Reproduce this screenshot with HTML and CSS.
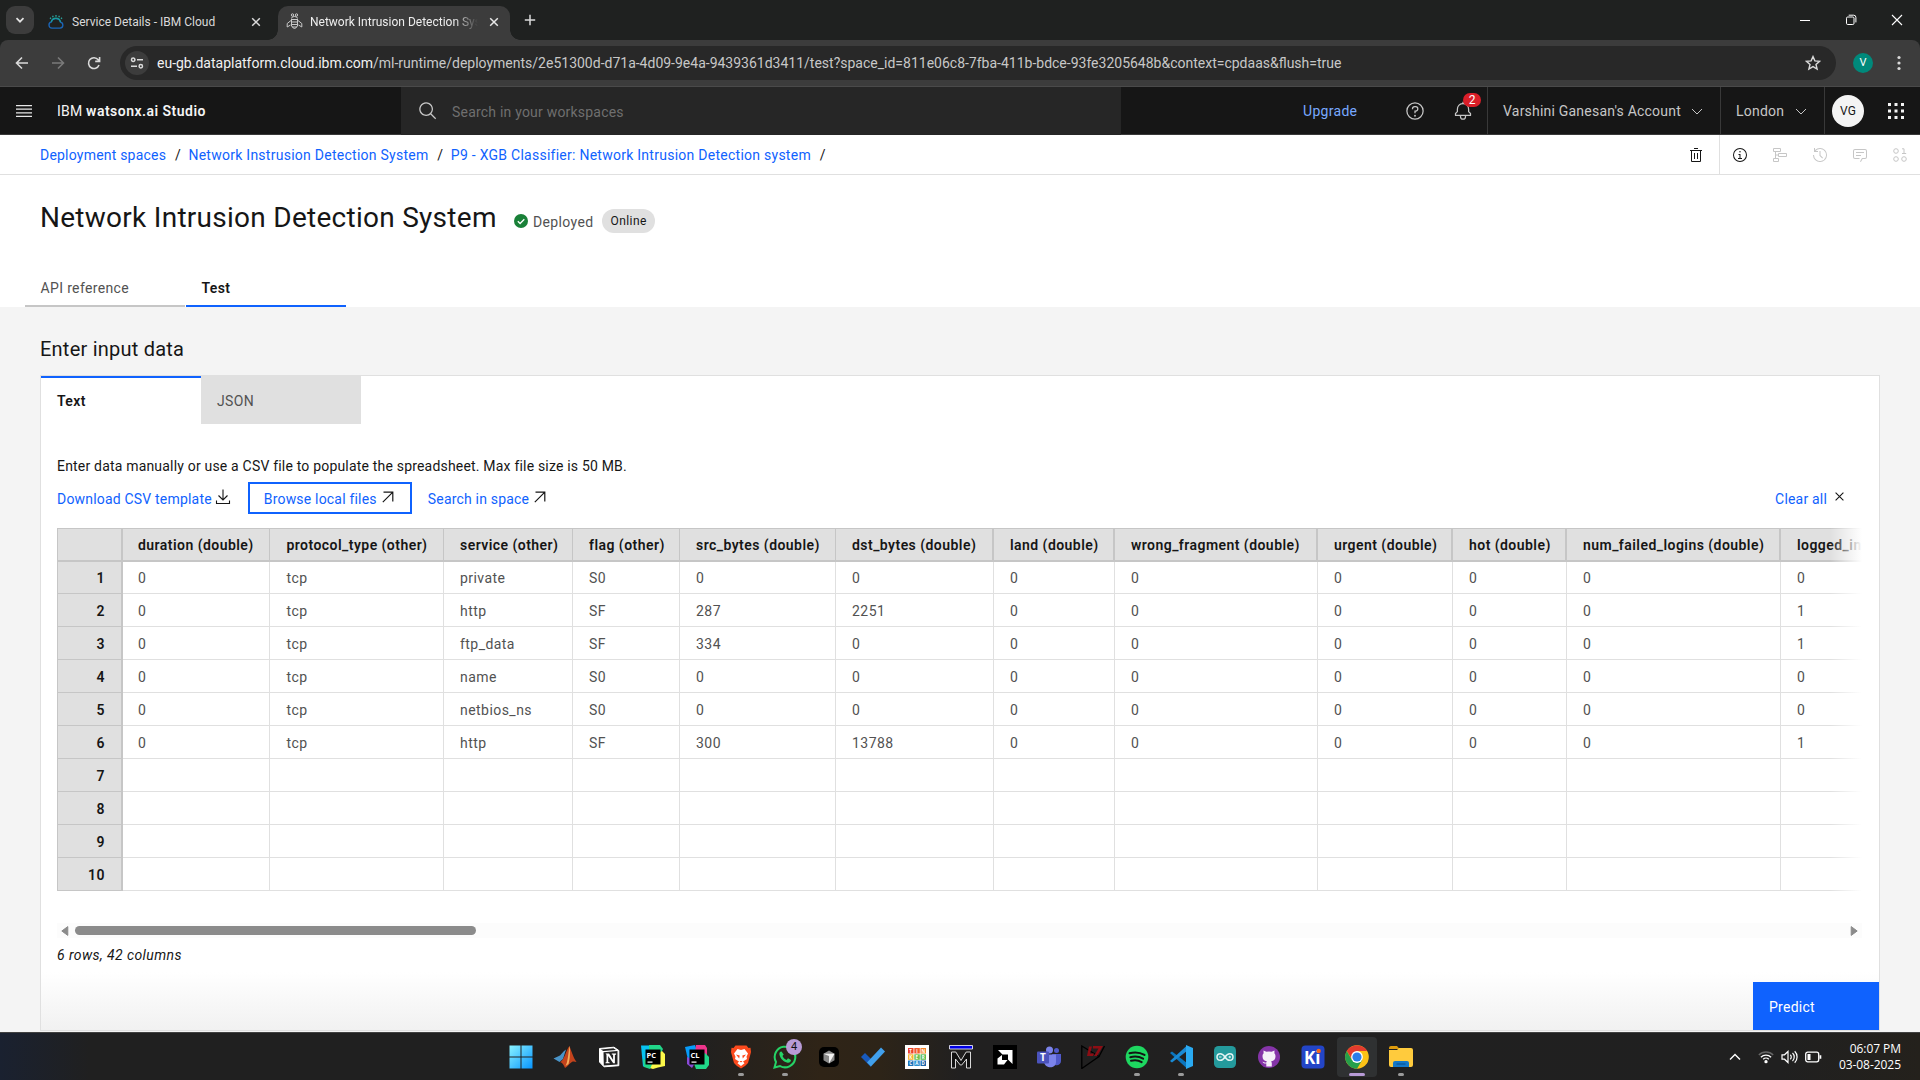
FILE: index.html
```
<!DOCTYPE html>
<html lang="en">
<head>
<meta charset="utf-8">
<title>Network Intrusion Detection System</title>
<link rel="stylesheet" href="styles.css">
</head>
<body>
<div class="tabstrip">
  <div class="tab-search"><svg width="10" height="10" viewBox="0 0 10 10"><path d="M1.5 3.2 5 6.7l3.5-3.5" fill="none" stroke="#e3e3e3" stroke-width="1.7"/></svg></div>
  <div class="btab">
    <svg class="fav" width="16" height="16" viewBox="0 0 16 16" fill="none" stroke-width="1.3"><path d="M4 14.2a3.2 3.2 0 0 1-.6-6.3A4.6 4.6 0 0 1 8 4.6c2.200 0 4 1.500 4.500 3.500a3.100 3.100 0 0 1-.5 6.100z" stroke="#1b66b8"/><path d="M3.300 8A4.700 4.700 0 0 1 12.500 8" stroke="#189c9c"/><path d="M3 4.800 2 3.800M5.200 3.300l-.6-1.500M8 2.800V1M10.800 3.300l.6-1.500M13 4.800l1-1" stroke="#2ba7a0"/></svg>
    <span class="btab-title">Service Details - IBM Cloud</span>
    <svg class="x" width="10" height="10" viewBox="0 0 10 10"><path d="m1.200 1.200 7.600 7.600m0-7.600L1.200 8.800" stroke="#dadada" stroke-width="1.500"/></svg>
  </div>
  <div class="btab active">
    <svg class="fav" width="17" height="17" viewBox="0 0 17 17" fill="none" stroke="#c9c9c9"><circle cx="6.500" cy="2" r="1.200"/><circle cx="10.500" cy="2" r="1.200"/><path d="M5.500 5.500a3 2 0 0 1 6 0M5 6.500h7M5 9h7M5.300 11.500h6.400M6 14h5M8.500 16l-3-3V6.500h6V13zM5 7.500l-3.800 3v3.500L4.500 12M12 7.500l3.800 3v3.500L12.500 12"/></svg>
    <span class="btab-title fade">Network Intrusion Detection System</span>
    <svg class="x" width="10" height="10" viewBox="0 0 10 10"><path d="m1.200 1.200 7.600 7.600m0-7.600L1.200 8.800" stroke="#e8e8e8" stroke-width="1.500"/></svg>
  </div>
  <svg class="newtab" width="12" height="12" viewBox="0 0 12 12"><path d="M6 .8v10.400M.8 6h10.400" stroke="#dadada" stroke-width="1.500"/></svg>
  <div class="winctl">
    <svg width="12" height="12" viewBox="0 0 12 12"><path d="M1 6.500h10" stroke="#fff"/></svg>
    <svg width="12" height="12" viewBox="0 0 12 12" fill="none" stroke="#fff"><rect x="1.500" y="3" width="7.500" height="7.500" rx="1.200"/><path d="M3.700 1.200h5a2.200 2.200 0 0 1 2.200 2.200v5"/></svg>
    <svg width="12" height="12" viewBox="0 0 12 12"><path d="m1 1 10 10M11 1 1 11" stroke="#fff" stroke-width="1.100"/></svg>
  </div>
</div>
<div class="toolbar">
  <svg class="nav back" width="14" height="14" viewBox="0 0 14 14" fill="none" stroke="#dadada" stroke-width="1.600"><path d="M13 7H1.800M7 1.500 1.500 7 7 12.500"/></svg>
  <svg class="nav fwd" width="14" height="14" viewBox="0 0 14 14" fill="none" stroke="#7a7a7a" stroke-width="1.600"><path d="M1 7h11.200M7 1.500 12.500 7 7 12.500"/></svg>
  <svg class="nav reload" width="14" height="14" viewBox="0 0 14 14" fill="none" stroke="#dadada" stroke-width="1.600"><path d="M12 9a5.400 5.400 0 1 1-.8-5.200L12.400 5M12.600 1v4.400H8.200"/></svg>
  <div class="omnibox">
    <div class="siteinfo"><svg width="14" height="14" viewBox="0 0 14 14" fill="none" stroke="#dadada" stroke-width="1.500"><circle cx="3.200" cy="3.700" r="1.700"/><path d="M7 3.700h6M1 10.300h6"/><circle cx="10.800" cy="10.300" r="1.700"/></svg></div>
    <span class="url"><b>eu-gb.dataplatform.cloud.ibm.com</b>/ml-runtime/deployments/2e51300d-d71a-4d09-9e4a-9439361d3411/test?space_id=811e06c8-7fba-411b-bdce-93fe3205648b&amp;context=cpdaas&amp;flush=true</span>
    <svg class="star" width="16" height="16" viewBox="0 0 16 16"><path d="m8 1.600 1.900 4.300 4.700.4-3.600 3.100 1.100 4.600L8 11.600 3.900 14 5 9.400 1.400 6.300l4.700-.4z" fill="none" stroke="#dadada" stroke-width="1.400"/></svg>
  </div>
  <span class="profile">V</span>
  <svg class="kebab" width="4" height="16" viewBox="0 0 4 16" fill="#dadada"><circle cx="2" cy="2.500" r="1.600"/><circle cx="2" cy="8" r="1.600"/><circle cx="2" cy="13.500" r="1.600"/></svg>
</div>

<header class="header">
  <div class="brand">
    <svg width="16" height="14" viewBox="0 0 16 14" fill="#e8e8e8"><path d="M0 1h16v1.200H0zM0 4.600h16v1.200H0zM0 8.200h16v1.200H0zM0 11.800h16V13H0z"/></svg>
    <span>IBM <b>watsonx.ai Studio</b></span>
  </div>
  <div class="search">
    <svg width="20" height="20" viewBox="0 0 32 32" fill="#c6c6c6"><path d="m29 27.600-7.600-7.600a11 11 0 1 0-1.400 1.400l7.600 7.600zM4 13a9 9 0 1 1 9 9 9 9 0 0 1-9-9z"/></svg>
    <span>Search in your workspaces</span>
  </div>
  <a class="upgrade">Upgrade</a>
  <svg class="help" width="20" height="20" viewBox="0 0 32 32" fill="#c6c6c6"><path d="M16 2a14 14 0 1 0 14 14A14 14 0 0 0 16 2zm0 26a12 12 0 1 1 12-12 12 12 0 0 1-12 12z"/><circle cx="16" cy="23.500" r="1.500"/><path d="M17 8h-1.500a4.500 4.500 0 0 0-4.500 4.500v.5h2v-.5a2.500 2.500 0 0 1 2.500-2.500H17a2.500 2.500 0 0 1 0 5h-2v4.500h2V17a4.500 4.500 0 0 0 0-9z"/></svg>
  <div class="bell">
    <svg width="20" height="20" viewBox="0 0 32 32" fill="#c6c6c6"><path d="m28.700 19.300-2.700-2.700V13a10 10 0 0 0-9-9.900V1h-2v2.100A10 10 0 0 0 6 13v3.600l-2.700 2.700a1 1 0 0 0-.3.700v3a1 1 0 0 0 1 1h7v1a5 5 0 0 0 10 0v-1h7a1 1 0 0 0 1-1v-3a1 1 0 0 0-.3-.7zM19 25a3 3 0 0 1-6 0v-1h6zm8-3H5v-1.600l2.700-2.700A1 1 0 0 0 8 17v-4a8 8 0 0 1 16 0v4a1 1 0 0 0 .3.700l2.700 2.700z"/></svg>
    <span class="badge">2</span>
  </div>
  <div class="hcell account"><span>Varshini Ganesan's Account</span><svg width="16" height="16" viewBox="0 0 16 16"><path d="m3 6 5 5 5-5" fill="none" stroke="#c6c6c6"/></svg></div>
  <div class="hcell city"><span>London</span><svg width="16" height="16" viewBox="0 0 16 16"><path d="m3 6 5 5 5-5" fill="none" stroke="#c6c6c6"/></svg></div>
  <div class="hcell last"><span class="avatar">VG</span>
    <svg width="16" height="16" viewBox="0 0 16 16" fill="#f4f4f4"><path d="M0 0h3v3H0zM6.500 0h3v3h-3zM13 0h3v3h-3zM0 6.500h3v3H0zM6.500 6.500h3v3h-3zM13 6.500h3v3h-3zM0 13h3v3H0zM6.500 13h3v3h-3zM13 13h3v3h-3z"/></svg>
  </div>
</header>

<nav class="crumbs">
  <a>Deployment spaces</a><i>/</i><a class="c2">Network Instrusion Detection System</a><i>/</i><a class="c3">P9 - XGB Classifier: Network Intrusion Detection system</a><i>/</i>
  <svg class="trash" width="16" height="16" viewBox="0 0 32 32" fill="#161616"><path d="M12 12h2v12h-2zm6 0h2v12h-2z"/><path d="M4 6v2h2v20a2 2 0 0 0 2 2h16a2 2 0 0 0 2-2V8h2V6zm4 22V8h16v20zm4-26h8v2h-8z"/></svg>
  <div class="tools">
    <svg width="16" height="16" viewBox="0 0 32 32" fill="#161616"><path d="M17 22v-8h-4v2h2v6h-3v2h8v-2zM16 8a1.500 1.500 0 1 0 1.500 1.500A1.500 1.500 0 0 0 16 8z"/><path d="M16 30a14 14 0 1 1 14-14 14 14 0 0 1-14 14zm0-26a12 12 0 1 0 12 12A12 12 0 0 0 16 4z"/></svg>
    <svg width="16" height="16" viewBox="0 0 16 16" fill="none" stroke="#c6c6c6"><path d="M1.500 1.500h7v3h-7zM6.500 6.500h8v3h-8zM1.500 11.500h5v3h-5zM3.500 4.500V8h3M3.500 8v3.500"/></svg>
    <svg width="16" height="16" viewBox="0 0 32 32" fill="#c6c6c6"><path d="M20.600 23 15 17.400V8h2v8.600l5 5z"/><path d="M16 2A14 14 0 0 0 6 6.200V2H4v8h8V8H7.100A12 12 0 1 1 4 16H2A14 14 0 1 0 16 2z"/></svg>
    <svg width="16" height="16" viewBox="0 0 32 32" fill="#c6c6c6"><path d="M17.700 30 16 29l4-7h6a2 2 0 0 0 2-2V8a2 2 0 0 0-2-2H6a2 2 0 0 0-2 2v12a2 2 0 0 0 2 2h9v2H6a4 4 0 0 1-4-4V8a4 4 0 0 1 4-4h20a4 4 0 0 1 4 4v12a4 4 0 0 1-4 4h-4.800z"/><path d="M8 10h16v2H8zm0 6h10v2H8z"/></svg>
    <svg width="16" height="16" viewBox="0 0 16 16" fill="none" stroke="#c6c6c6"><circle cx="4" cy="4" r="2.300"/><circle cx="4" cy="12" r="2.300"/><circle cx="12" cy="12" r="2.300"/><path d="M10 1.800h2v4.700M10 6.500h4.200"/></svg>
  </div>
</nav>

<section class="pagehead">
  <div class="titlerow">
    <h1>Network Intrusion Detection System</h1>
    <svg width="14" height="14" viewBox="0 0 14 14"><circle cx="7" cy="7" r="7" fill="#198038"/><path d="m3.800 7.200 2.300 2.300 4.200-4.300" fill="none" stroke="#fff" stroke-width="1.300"/></svg>
    <span class="deployed">Deployed</span><span class="tag">Online</span>
  </div>
  <div class="tabs"><div class="tab">API reference</div><div class="tab on">Test</div></div>
</section>

<main class="main">
  <h2>Enter input data</h2>
  <div class="panel">
    <div class="ptabs"><div class="ptab on">Text</div><div class="ptab">JSON</div></div>
    <p class="desc">Enter data manually or use a CSV file to populate the spreadsheet. Max file size is 50 MB.</p>
    <div class="actions">
      <a class="act dl">Download CSV template<svg width="16" height="16" viewBox="0 0 16 16" fill="none" stroke="#161616" stroke-width="1.100"><path d="M8 .5v10.300M3.500 6.500 8 11l4.500-4.500M1.500 11.500v3h13v-3"/></svg></a>
      <a class="act browse">Browse local files<svg width="12" height="12" viewBox="0 0 12 12" fill="none" stroke="#161616" stroke-width="1.200"><path d="M1.500 1.200h9.300v9.300M10.800 1.200.8 11.200"/></svg></a>
      <a class="act">Search in space<svg width="12" height="12" viewBox="0 0 12 12" fill="none" stroke="#161616" stroke-width="1.200"><path d="M1.500 1.200h9.300v9.300M10.800 1.200.8 11.200"/></svg></a>
      <a class="act clear">Clear all<svg width="9" height="9" viewBox="0 0 9 9"><path d="m.6.6 7.800 7.800m0-7.800L.6 8.400" stroke="#161616" stroke-width="1.100"/></svg></a>
    </div>
    <div class="sheet">
      <table>
        <colgroup><col class="w0"><col class="w1"><col class="w2"><col class="w3"><col class="w4"><col class="w5"><col class="w6"><col class="w7"><col class="w8"><col class="w9"><col class="w10"><col class="w11"><col class="w12"></colgroup>
        <thead><tr><th></th><th>duration (double)</th><th>protocol_type (other)</th><th>service (other)</th><th>flag (other)</th><th>src_bytes (double)</th><th>dst_bytes (double)</th><th>land (double)</th><th>wrong_fragment (double)</th><th>urgent (double)</th><th>hot (double)</th><th>num_failed_logins (double)</th><th>logged_in (double)</th></tr></thead>
        <tbody>
        <tr><th>1</th><td>0</td><td>tcp</td><td>private</td><td>S0</td><td>0</td><td>0</td><td>0</td><td>0</td><td>0</td><td>0</td><td>0</td><td>0</td></tr>
        <tr><th>2</th><td>0</td><td>tcp</td><td>http</td><td>SF</td><td>287</td><td>2251</td><td>0</td><td>0</td><td>0</td><td>0</td><td>0</td><td>1</td></tr>
        <tr><th>3</th><td>0</td><td>tcp</td><td>ftp_data</td><td>SF</td><td>334</td><td>0</td><td>0</td><td>0</td><td>0</td><td>0</td><td>0</td><td>1</td></tr>
        <tr><th>4</th><td>0</td><td>tcp</td><td>name</td><td>S0</td><td>0</td><td>0</td><td>0</td><td>0</td><td>0</td><td>0</td><td>0</td><td>0</td></tr>
        <tr><th>5</th><td>0</td><td>tcp</td><td>netbios_ns</td><td>S0</td><td>0</td><td>0</td><td>0</td><td>0</td><td>0</td><td>0</td><td>0</td><td>0</td></tr>
        <tr><th>6</th><td>0</td><td>tcp</td><td>http</td><td>SF</td><td>300</td><td>13788</td><td>0</td><td>0</td><td>0</td><td>0</td><td>0</td><td>1</td></tr>
        <tr><th>7</th><td></td><td></td><td></td><td></td><td></td><td></td><td></td><td></td><td></td><td></td><td></td><td></td></tr>
        <tr><th>8</th><td></td><td></td><td></td><td></td><td></td><td></td><td></td><td></td><td></td><td></td><td></td><td></td></tr>
        <tr><th>9</th><td></td><td></td><td></td><td></td><td></td><td></td><td></td><td></td><td></td><td></td><td></td><td></td></tr>
        <tr><th>10</th><td></td><td></td><td></td><td></td><td></td><td></td><td></td><td></td><td></td><td></td><td></td><td></td></tr>
        </tbody>
      </table>
    </div>
    <div class="scroll">
      <svg width="8" height="10" viewBox="0 0 8 10"><path d="M6.800.6v8.800L.8 5z" fill="#8b8b8b" stroke="#8b8b8b" stroke-linejoin="round"/></svg>
      <span class="thumb"></span>
      <svg class="right" width="8" height="10" viewBox="0 0 8 10"><path d="M1.200.6v8.800l6-4.400z" fill="#8b8b8b" stroke="#8b8b8b" stroke-linejoin="round"/></svg>
    </div>
    <p class="count">6 rows, 42 columns</p>
    <div class="foot"><button class="predict">Predict</button></div>
  </div>
</main>

<footer class="taskbar">
  <div class="apps">
    <div class="app"><svg viewBox="0 0 24 24"><defs><linearGradient id="win" x2="1" y2="1"><stop stop-color="#8af3ff"/><stop offset="1" stop-color="#0795ff"/></linearGradient></defs><path d="M.5.500h11v11H.5zM12.500.500h11v11h-11zM.5 12.500h11v11H.5zM12.500 12.500h11v11h-11z" fill="url(#win)"/></svg></div>
    <div class="app"><svg viewBox="0 0 24 24"><path d="m.5 13.500 6.500-3 4-4.500 2-1.500-3 9.500-3.500 3z" fill="#4a94c8"/><path d="M7 17c4-1 6-12 9.500-16 1.500 4 4 12 7 16-2.500-1-4.500-1-6.500 1.500-2 2-3.500 3.500-5 4.500-1.500-3.500-2.500-5.500-5-6z" fill="#c3431c"/><path d="M12.500 21C15 17 15.500 6 16.500 1c1 5 .5 13-1 18z" fill="#f6b15d"/></svg></div>
    <div class="app"><svg viewBox="0 0 24 24"><path d="M2.500 3.500 17 2.200l4.800 3.300v15.200L7 21.800 2.500 17z" fill="#fff" stroke="#fff"/><path d="M6.500 7.200 20.500 6v13.500L6.800 20.400zM3.800 4.400 16.500 3.300 19 5 6.300 6z" fill="#222"/><path d="M8.500 8.500h3.600l4 6.500V9.800l-1.300-.4v-1h4.300v1l-1.200.5v8.300h-1.700L11.200 11v6l1.500.5v.8H8.500v-.8l1-.5V9.800z" fill="#fff"/></svg></div>
    <div class="app"><svg viewBox="0 0 24 24"><path d="M0 .5h11l-3 21H2z" fill="#07c3f2"/><path d="M8 0h11l3 4-2 4H8z" fill="#21d789"/><path d="M5 22 12 12l9-6 3 3v12l-7 1.500-5 1.500z" fill="#fcf84a"/><path d="m2 14 10 3-3 7-6-2z" fill="#21d789"/><path d="M4.500 4.500h15v15h-15z"/><text x="5.500" y="12.500" class="jb">PC</text><path d="M6.500 16.500h5v1.200h-5z" fill="#fff"/></svg></div>
    <div class="app"><svg viewBox="0 0 24 24"><path d="M0 2 10 0l3 9-9 10z" fill="#079cfa"/><path d="M11 0h9l2 3v8l-12-3z" fill="#ed358c"/><path d="m2 12 9 4-4 7-5-4z" fill="#8a4bd8"/><path d="m8 16 12-8 4 4v8l-3 4H11z" fill="#21d789"/><path d="M4.500 4.500h15v15h-15z"/><text x="5.500" y="12.500" class="jb">CL</text><path d="M6.500 16.500h5v1.200h-5z" fill="#fff"/></svg></div>
    <div class="app run"><svg viewBox="0 0 24 24"><path d="M6.500.5h11L19.500 3l2-.3L22 7l-.5 2-2.500 9-3 3-4 2.500L8 21l-3-3L2.500 9 2 7l.5-4.300 2 .3z" fill="#fb4a1d"/><path d="m12 5 3.500-1L19 8.500l-1.500 3.200.5 2.300-4 2.500 1.500 1.700L12 21l-3.500-2.800L10 16.500 6 14l.5-2.300L5 8.500 8.500 4z" fill="#fff"/><path d="m7 9.500 3.700 1-.5 3zM17 9.500l-3.700 1 .5 3zM10.500 16h3L12 17.500z" fill="#fb4a1d"/></svg></div>
    <div class="app run"><svg viewBox="0 0 24 24"><path d="M1.500 22.500 3 17A10.300 10.300 0 1 1 7 21z" fill="none" stroke="#25d366" stroke-width="2"/><path d="M8.500 6.500c-1.700 0-2.500 1.700-2 3.500 1 3.700 4.300 7 8 7.700 2 .3 3.500-.9 3.500-2.700l-3-1.700-1.500 1.600c-1.600-.6-3.300-2.200-4-4l1.200-1.500z" fill="#25d366"/></svg><span class="count4">4</span></div>
    <div class="app"><svg viewBox="0 0 24 24"><rect x="2" y="2" width="20" height="20" rx="5" fill="#000"/><path d="m12 5.500 5.500 3.200v6.600L12 18.500l-5.500-3.200V8.700z" fill="#8a8a8a"/><path d="m6.500 8.700 11 0L12 18.500V11z" fill="#f1f1f1"/></svg></div>
    <div class="app"><svg viewBox="0 0 24 24"><path d="m0 12 4-4 6 6v8z" fill="#185abd"/><path d="M6 17.500 20 2.500l4 4L10 21.500z" fill="#41a0ec"/></svg></div>
    <div class="app"><svg viewBox="0 0 24 24"><path d="M0 0h24v24H0z" fill="#fff"/><path d="M3 3h5.500v5.500H3z" fill="#ed3f2b"/><path d="M9.300 3h5.500v5.500H9.300z" fill="#f15b2b"/><path d="M15.500 3H21v5.500h-5.500z" fill="#f5842b"/><path d="M3 9.300h5.500v5.500H3z" fill="#f6b32b"/><path d="M9.300 9.300h5.500v5.500H9.300z" fill="#6cc04a"/><path d="M15.500 9.300H21v5.500h-5.500z" fill="#5bbd53"/><path d="M3 15.500h5.500V21H3z" fill="#1c75bc"/><path d="M9.300 15.500h5.500V21H9.300z" fill="#2b8fd1"/><path d="M15.500 15.500H21V21h-5.500z" fill="#1c63a8"/><g class="tk"><text x="4.200" y="7.500">T</text><text x="11.200" y="7.500">I</text><text x="16.500" y="7.500">N</text><text x="4.200" y="13.800">K</text><text x="10.500" y="13.800">E</text><text x="16.700" y="13.800">R</text><text x="4.200" y="20">C</text><text x="10.300" y="20">A</text><text x="16.500" y="20">D</text></g></svg></div>
    <div class="app"><svg viewBox="0 0 24 24"><path d="M.5.500h23v3.500H.5z" fill="#0000e6" stroke="#fff" stroke-width=".8"/><path d="M2.500 23V7h4.300L12 15.500 17.200 7h4.300v16h-4v-9L12.700 20h-1.400L6.500 14v9z" fill="#111" stroke="#eee" stroke-width=".9"/></svg></div>
    <div class="app"><svg viewBox="0 0 24 24"><path d="M0 0h24v24H0z"/><path d="M5 5h14.500v14L15 14.500V9.500h-5.500z" fill="#fff"/><path d="M4.500 13.500 9 10v5h5.500L11 19.500H4.500z" fill="#fff"/></svg></div>
    <div class="app"><svg viewBox="0 0 24 24"><circle cx="19.500" cy="5.500" r="2.500" fill="#5059c9"/><path d="M15 9h9v7c0 3-3 5-6 4z" fill="#5059c9"/><circle cx="12.500" cy="5" r="3.500" fill="#7b83eb"/><path d="M7 9.500h12V17c0 7-11 7-12 0z" fill="#7b83eb"/><rect y="6.500" width="12" height="12" rx="1" fill="#4b53bc"/><text x="3" y="16" class="teams">T</text></svg></div>
    <div class="app"><svg viewBox="0 0 24 24"><path d="M.8 1 18 11.500.8 23.500zM18 11.500 23.500 1" fill="none" stroke="#000" stroke-width="1.300"/><path d="M8 1.500h3L9 8.500h4l-1 2.500H6zM12 1h10l-6 10h-3l4.500-7.500H12z" fill="#8d0d14"/></svg></div>
    <div class="app run"><svg viewBox="0 0 24 24"><circle cx="12" cy="12" r="11.300" fill="#1ed760"/><path d="M4.500 8.300c5-1.400 10.500-.9 15 1.600M5.300 12.200c4.300-1.200 9-.7 12.800 1.500M6 15.800c3.700-1 7.500-.6 10.700 1.300" fill="none" stroke="#131313" stroke-width="2" stroke-linecap="round"/></svg></div>
    <div class="app run"><svg viewBox="0 0 24 24"><path d="m1 8 2-1.500L18 18v5.500z" fill="#0b75bd"/><path d="m1 16 2 1.500L18 6V.5z" fill="#1a8ad4"/><path d="M17 0 24 3v18l-7 3z" fill="#2aaaf2"/></svg></div>
    <div class="app"><svg viewBox="0 0 24 24"><rect x="1" y="1" width="22" height="22" rx="4.500" fill="#249a9c"/><path d="M12 12c-2-3-3.500-3.300-4.700-3.300a3.300 3.300 0 0 0 0 6.600C8.500 15.300 10 15 12 12s3.500-3.300 4.700-3.300a3.300 3.300 0 0 1 0 6.600C15.500 15.300 14 15 12 12z" fill="none" stroke="#e3f4f3" stroke-width="1.500"/><path d="M6 12h2.500M15.500 12H18M16.800 10.800v2.400" stroke="#e3f4f3"/></svg></div>
    <div class="app"><svg viewBox="0 0 24 24"><circle cx="12" cy="12" r="11" fill="#8534a8"/><path d="M9.300 21.500v-3c-2.300.5-3-.7-3.800-1.700 1.500-.3 2 1.300 3.800.8l.5-1.300C7 15.800 5.500 14.200 5.500 11.300c0-1.400.4-2.300 1.100-3.100l-.1-2.700 2.900 1.200a11 11 0 0 1 5.200 0l2.900-1.200-.1 2.700c.7.800 1.100 1.700 1.100 3.100 0 2.900-1.500 4.500-4.300 5l.6 1.800v3.400z" fill="#f5f0f8"/></svg></div>
    <div class="app"><svg viewBox="0 0 24 24"><rect x=".5" y=".5" width="23" height="23" rx="4" fill="#2345c7"/><text x="3" y="19" class="ki">Ki</text><circle cx="17.700" cy="6" r="2.200" fill="#f4661b"/></svg></div>
    <div class="app run focus"><svg viewBox="0 0 24 24"><circle cx="12" cy="12" r="11.800" fill="#fbc116"/><path d="M1.800 6A11.800 11.800 0 0 1 22.200 6H12L8 16z" fill="#e33b2e"/><path d="M1.800 6A11.800 11.800 0 0 0 12 23.800L17.200 15 6.900 15z" fill="#269f4b"/><circle cx="12" cy="12" r="5.900" fill="#fff"/><circle cx="12" cy="12" r="4.600" fill="#2b7de9"/></svg></div>
    <div class="app run"><svg viewBox="0 0 24 24"><path d="M0 3a2 2 0 0 1 2-2h6l2.500 3H0z" fill="#e09c0c"/><path d="M0 5h8l2-2h12a2 2 0 0 1 2 2v15a2 2 0 0 1-2 2H2a2 2 0 0 1-2-2z" fill="#ffcb3d"/><path d="M4 22v-4a2 2 0 0 1 2-2h12a2 2 0 0 1 2 2v4z" fill="#1478c8"/><path d="M7.500 19h9" stroke="#0c5ba1" stroke-width="1.500"/></svg></div>
  </div>
  <div class="tray">
    <svg class="up" width="12" height="8" viewBox="0 0 12 8"><path d="m1 6.500 5-5 5 5" fill="none" stroke="#fff" stroke-width="1.400"/></svg>
    <svg class="wifi" width="16" height="14" viewBox="0 0 16 14" fill="none" stroke="#fff" stroke-width="1.300"><path d="M.8 5a10.200 10.200 0 0 1 14.400 0" stroke="#666"/><path d="M2.900 7.200a7.200 7.200 0 0 1 10.200 0M5.200 9.300a4 4 0 0 1 5.600 0"/><circle cx="8" cy="11.700" r="1" fill="#fff"/></svg>
    <svg class="vol" width="17" height="14" viewBox="0 0 17 14" fill="none" stroke="#fff" stroke-width="1.200"><path d="M1 4.800h2.500L7 1.500v11L3.500 9.200H1zM9.300 4.800a3 3 0 0 1 0 4.400M11.500 3a5.500 5.500 0 0 1 0 8M13.700 1.300a8 8 0 0 1 0 11.400"/></svg>
    <svg class="bat" width="17" height="12" viewBox="0 0 17 12"><rect x=".7" y="1.200" width="13" height="9.600" rx="2" fill="none" stroke="#fff" stroke-width="1.300"/><path d="M2.500 3h3v6h-3zM14.500 4.200h1.800v3.600h-1.800z" fill="#fff"/></svg>
    <div class="clock"><span>06:07 PM</span><span>03-08-2025</span></div>
  </div>
</footer>
</body>
</html>
```
FILE: styles.css
```
* { box-sizing: border-box; }
body {
  margin: 0;
  width: 1920px;
  height: 1080px;
  overflow: hidden;
  display: flex;
  flex-direction: column;
  background: #1f2120;
  color: #161616;
  font: 14px/18px Roboto, "Liberation Sans", sans-serif;
  letter-spacing: .21px;
}
svg { display: block; flex: none; }
h1, h2, p { margin: 0; font-weight: 400; }

/* browser chrome */
.tabstrip {
  height: 40px;
  flex: none;
  display: flex;
  align-items: flex-end;
  color: #dadada;
  font-size: 12px;
  letter-spacing: 0;
}
.tab-search {
  width: 28px; height: 28px;
  margin: 0 0 6px 6px;
  border-radius: 9px;
  background: #3c3c3c;
  display: grid;
  place-items: center;
}
.btab {
  height: 34px;
  width: 232px;
  margin-left: 6px;
  padding: 0 0 3px 8px;
  display: flex;
  align-items: center;
}
.btab.active {
  background: #3c3c3c;
  border-radius: 10px 10px 0 0;
  color: #eee;
  position: relative;
}
.btab.active::before, .btab.active::after {
  content: "";
  position: absolute;
  bottom: 0;
  width: 10px; height: 10px;
}
.btab.active::before { left: -10px; background: radial-gradient(circle at 0 0, transparent 9.500px, #3c3c3c 10px); }
.btab.active::after { right: -10px; background: radial-gradient(circle at 100% 0, transparent 9.500px, #3c3c3c 10px); }
.btab-title { margin-left: 8px; width: 169px; white-space: nowrap; overflow: hidden; }
.btab.active .btab-title { margin-left: 7px; }
.btab-title.fade { -webkit-mask-image: linear-gradient(90deg, #000 144px, transparent 168px); mask-image: linear-gradient(90deg, #000 144px, transparent 168px); }
.btab .x { margin-left: 10px; }
.newtab { margin: 0 0 14px 14px; }
.winctl { margin-left: auto; display: flex; gap: 34px; padding: 0 17px 14px 0; }
.toolbar {
  height: 47px;
  flex: none;
  display: flex;
  align-items: center;
  padding: 0 19px 1px 15px;
  background: #3c3c3c;
  border-bottom: 1px solid #4a4a4a;
  border-radius: 8px 8px 0 0;
}
.nav.fwd, .nav.reload { margin-left: 22px; }
.omnibox {
  width: 1716px; height: 34px;
  margin-left: 19px;
  border-radius: 17px;
  background: #282828;
  display: flex;
  align-items: center;
  padding: 0 15px 0 5px;
  color: #c7c7c7;
  letter-spacing: 0;
}
.omnibox b { font-weight: 400; color: #f2f2f2; }
.siteinfo { width: 24px; height: 24px; border-radius: 12px; background: #3c3c3c; display: grid; place-items: center; }
.url { margin-left: 8px; }
.star { margin-left: auto; }
.profile { width: 20px; height: 20px; margin-left: 17px; border-radius: 50%; background: #00897b; color: #fff; font-size: 11px; line-height: 20px; text-align: center; }
.kebab { margin-left: auto; }

/* application header */
.header { height: 48px; flex: none; display: flex; align-items: center; background: #161616; color: #c6c6c6; border-bottom: 1px solid #393939; }
.header span:not(.badge):not(.avatar), .upgrade { padding-top: 1px; }
.brand { width: 401px; display: flex; align-items: center; padding-left: 16px; gap: 25px; color: #f4f4f4; }
.brand b { font-weight: 600; letter-spacing: .48px; }
.search { width: 720px; height: 48px; background: #262626; display: flex; align-items: center; padding-left: 17px; gap: 14px; color: #6f6f6f; align-self: flex-start; }
.upgrade { margin-left: 182px; width: 102px; color: #78a9ff; letter-spacing: .3px; }
.bell { position: relative; margin-left: 28px; width: 34px; }
.badge { position: absolute; left: 10px; top: -8px; width: 18px; height: 14px; border-radius: 7px; background: #da1e28; color: #fff; font-size: 12px; line-height: 14px; text-align: center; letter-spacing: 0; }
.hcell { height: 47px; border-left: 1px solid #393939; display: flex; align-items: center; padding-left: 15px; }
.account { width: 233px; gap: 8px; }
.city { width: 104px; gap: 9px; }
.last { padding-left: 7px; gap: 24px; }
.avatar { width: 32px; height: 32px; border-radius: 50%; background: #f4f4f4; color: #161616; font-size: 12px; line-height: 32px; text-align: center; }

.crumbs { height: 40px; flex: none; display: flex; align-items: center; padding-left: 40px; background: #fff; border-bottom: 1px solid #e0e0e0; color: #0f62fe; }
.crumbs a, .crumbs i { padding-top: 1px; }
.crumbs i { font-style: normal; color: #161616; margin: 0 7.500px 0 8.800px; }
.c2, .c3 { letter-spacing: .26px; }
.trash { margin-left: auto; margin-right: 15px; margin-top: 1px; }
.tools { height: 39px; border-left: 1px solid #e0e0e0; padding: 0 12px; display: flex; align-items: center; gap: 24px; }

.pagehead { height: 132px; flex: none; padding: 24px 25px 0; display: flex; flex-direction: column; justify-content: space-between; background: #fff; }
.titlerow { display: flex; align-items: center; padding: 0 15px; height: 36px; }
h1 { font-size: 28px; line-height: 36px; letter-spacing: .27px; width: 474px; padding-top: 2px; }
.deployed { color: #525252; margin: 9px 9px 0 5px; letter-spacing: .35px; }
.titlerow svg { margin-top: 8px; }
.tag { height: 24px; padding: 0 8px; border-radius: 12px; background: #e0e0e0; font-size: 12px; line-height: 24px; letter-spacing: .45px; margin-top: 8px; }
.tabs { display: flex; gap: 1px; }
.tab { width: 160px; height: 40px; padding: 12px 15px 0 15.500px; border-bottom: 2px solid #c6c6c6; color: #525252; letter-spacing: .35px; }
.tab.on { border-color: #0f62fe; color: #161616; font-weight: 600; }

/* input panel */
.main { flex: none; height: 725px; background: #f4f4f4; padding: 29px 40px 0; }
h2 { font-size: 20px; line-height: 26px; letter-spacing: .23px; }
.panel { margin-top: 13px; height: 656px; background: #fff; border: 1px solid #e0e0e0; display: flex; flex-direction: column; }
.ptabs { display: flex; }
.ptab { width: 160px; height: 48px; padding: 16px 16px 0; background: #e0e0e0; color: #525252; letter-spacing: .35px; }
.ptab.on { background: #fff; color: #161616; font-weight: 600; border-top: 2px solid #0f62fe; padding-top: 14px; }
.desc { margin: 32px 16px 0; padding-top: 1px; height: 18px; letter-spacing: .19px; }
.actions { display: flex; align-items: center; height: 32px; margin: 8px 16px 0; }
.act { display: flex; align-items: center; color: #0f62fe; letter-spacing: .19px; padding-top: 1px; }
.act svg { margin: -4px 0 0 5px; }
.act.dl svg { margin-left: 3px; }
.browse { width: 164px; height: 32px; border: 2px solid #0f62fe; padding-left: 14px; margin: 0 16px 0 17px; }
.clear { margin-left: auto; margin-right: 19px; }
.act.clear svg { margin-left: 8px; }
.sheet { margin: 14px 16px 0; width: 1805px; height: 364px; overflow: hidden; position: relative; }
.sheet::after { content: ""; position: absolute; right: 0; top: 0; width: 32px; height: 100%; background: linear-gradient(90deg, rgba(255,255,255,0), #fff); }
table { table-layout: fixed; width: 1890px; border-collapse: separate; border-spacing: 0; }
.w0 { width: 66px; } .w1 { width: 147px; } .w2 { width: 174px; } .w3 { width: 129px; } .w4 { width: 107px; }
.w5 { width: 156px; } .w6 { width: 158px; } .w7 { width: 121px; } .w8 { width: 203px; } .w9 { width: 135px; }
.w10 { width: 114px; } .w11 { width: 214px; } .w12 { width: 166px; }
th, td { height: 33px; padding: 1px 0 0 16px; text-align: left; white-space: nowrap; border-right: 1px solid #e0e0e0; border-bottom: 1px solid #e0e0e0; letter-spacing: .45px; color: #525252; line-height: 18px; }
th { background: #e0e0e0; border-color: #c6c6c6; color: #161616; font-weight: 600; }
thead th { height: 34px; border-top: 1px solid #c6c6c6; border-bottom-width: 2px; }
thead th:nth-child(n+7) { border-right-width: 2px; }
th:first-child { border-left: 1px solid #c6c6c6; border-right-width: 2px; text-align: right; padding: 1px 16px 0 0; }
tr > :nth-child(2) { padding-left: 15px; }
tr > :nth-child(3) { padding-left: 16.500px; }
tbody tr:first-child > * { height: 32px; padding-top: 0; }
.scroll { margin: 31px 16px 0; width: 1805px; height: 15px; background: #fcfcfc; display: flex; align-items: center; padding: 0 4px; }
.thumb { width: 401px; height: 9px; border-radius: 5px; background: #8b8b8b; margin-left: 6px; }
.scroll .right { margin-left: auto; }
.count { margin: 8px 16px 0; font-style: italic; letter-spacing: .42px; }
.foot { margin-top: 8px; flex: 1; display: flex; justify-content: flex-end; align-items: flex-end; background: linear-gradient(#fff, #f1f1f1); }
.predict { width: 126px; height: 48px; border: 0; padding: 1px 16px 0; background: #0f62fe; color: #fff; font: inherit; letter-spacing: .27px; text-align: left; }

/* taskbar */
.taskbar { height: 48px; flex: none; display: flex; align-items: center; justify-content: space-between; border-top: 1px solid #414141; background: linear-gradient(90deg, #1a2130 0, #202020 90px, #202020 690px, #2f2417 820px, #2d2418 880px, #212020 960px, #202020 1780px, #24211c 1920px); padding: 0 19px 0 501px; }
.apps { display: flex; gap: 4px; }
.app { width: 40px; height: 40px; border-radius: 4px; display: grid; place-items: center; position: relative; }
.app svg { width: 24px; height: 24px; }
.app.focus { background: #2f3132; }
.app.run::after { content: ""; position: absolute; bottom: 1px; left: 17px; width: 6px; height: 3px; border-radius: 2px; background: #9a9a9a; }
.app.focus::after { left: 12px; width: 16px; background: #b79ad6; }
.count4 { position: absolute; left: 21px; top: 2px; width: 16px; height: 16px; border-radius: 50%; background: #b89bd6; color: #111; font-size: 11px; line-height: 16px; text-align: center; letter-spacing: 0; }
.jb { font: 700 7.500px "Open Sans", sans-serif; fill: #fff; letter-spacing: 0; }
.tk { font: 700 4.500px "Open Sans", sans-serif; fill: #fff; letter-spacing: 0; }
.teams { font: 700 10px "Open Sans", sans-serif; fill: #fff; letter-spacing: 0; }
.ki { font: 700 17px "Open Sans", sans-serif; fill: #fff; letter-spacing: 0; }
.tray { display: flex; align-items: center; color: #fff; }
.wifi { margin-left: 17px; }
.vol { margin-left: 7px; }
.bat { margin-left: 7px; }
.clock { width: 79px; display: flex; flex-direction: column; align-items: flex-end; font: 12px/16px "Open Sans", sans-serif; letter-spacing: -.05px; }
```
